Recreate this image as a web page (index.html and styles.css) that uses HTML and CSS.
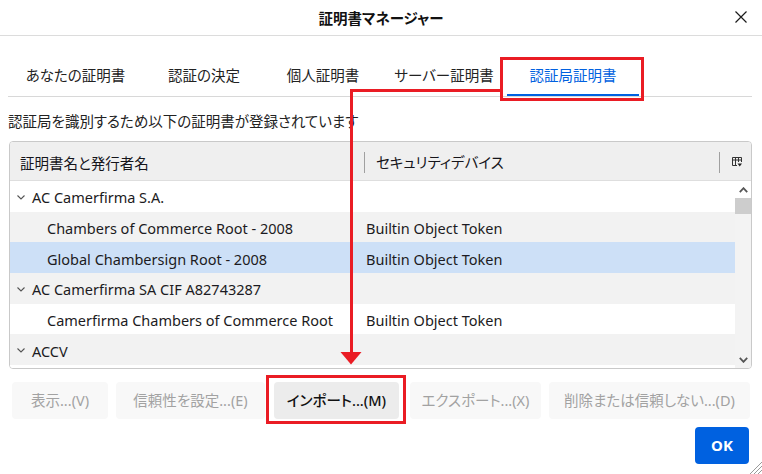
FILE: index.html
```html
<!DOCTYPE html>
<html lang="ja">
<head>
<meta charset="utf-8">
<title>証明書マネージャー</title>
<link rel="stylesheet" href="styles.css">
</head>
<body>
<div class="dialog">
  <header class="titlebar">
    <span class="title">証明書マネージャー</span>
    <span class="close" aria-label="閉じる">
      <svg width="12" height="12" viewBox="0 0 12 12"><path d="M0.5 0.5 L11.5 11.5 M11.5 0.5 L0.5 11.5" stroke="#1b1b1b" stroke-width="1.2" fill="none"/></svg>
    </span>
  </header>

  <nav class="tabs">
    <span class="tab t1">あなたの証明書</span>
    <span class="tab t2">認証の決定</span>
    <span class="tab t3">個人証明書</span>
    <span class="tab t4">サーバー証明書</span>
    <span class="tab t5 selected">認証局証明書</span>
  </nav>

  <p class="desc">認証局を識別するため以下の証明書が登録されています</p>

  <div class="tree">
    <div class="thead">
      <div class="th th-name">証明書名と発行者名</div>
      <div class="th th-dev">セキュリティデバイス</div>
      <div class="th th-pick">
        <svg width="10" height="10" viewBox="0 0 10 10"><path d="M0.5 0.5 H9.5 V5 M0.5 0.5 V8.5 H5 M0.5 3 H9.5 M3.5 0.5 V8.5 M6.5 0.5 V5" stroke="#333" stroke-width="1" fill="none"/><path d="M5.5 6.5 H10 L7.75 9.5 Z" fill="#222"/></svg>
      </div>
    </div>
    <div class="tbody">
      <div class="rows">
        <div class="row odd"><div class="td td-name parent"><span class="twisty"><svg width="8" height="5" viewBox="0 0 8 5"><path d="M0.5 0.5 L4 4 L7.5 0.5" stroke="#555" stroke-width="1.1" fill="none"/></svg></span>AC Camerfirma S.A.</div><div class="td td-dev"></div></div>
        <div class="row even"><div class="td td-name child">Chambers of Commerce Root - 2008</div><div class="td td-dev">Builtin Object Token</div></div>
        <div class="row sel"><div class="td td-name child">Global Chambersign Root - 2008</div><div class="td td-dev">Builtin Object Token</div></div>
        <div class="row even"><div class="td td-name parent"><span class="twisty"><svg width="8" height="5" viewBox="0 0 8 5"><path d="M0.5 0.5 L4 4 L7.5 0.5" stroke="#555" stroke-width="1.1" fill="none"/></svg></span>AC Camerfirma SA CIF A82743287</div><div class="td td-dev"></div></div>
        <div class="row odd"><div class="td td-name child">Camerfirma Chambers of Commerce Root</div><div class="td td-dev">Builtin Object Token</div></div>
        <div class="row even"><div class="td td-name parent"><span class="twisty"><svg width="8" height="5" viewBox="0 0 8 5"><path d="M0.5 0.5 L4 4 L7.5 0.5" stroke="#555" stroke-width="1.1" fill="none"/></svg></span>ACCV</div><div class="td td-dev"></div></div>
        <div class="row odd"><div class="td td-name child">ACCVRAIZ1</div><div class="td td-dev">Builtin Object Token</div></div>
      </div>
      <div class="scrollbar">
        <span class="sb-btn">
          <svg width="9" height="6" viewBox="0 0 9 6"><path d="M0.8 5.2 L4.5 1.2 L8.2 5.2" stroke="#555" stroke-width="1.8" fill="none"/></svg>
        </span>
        <span class="sb-track"><span class="sb-thumb"></span></span>
        <span class="sb-btn">
          <svg width="9" height="6" viewBox="0 0 9 6"><path d="M0.8 0.8 L4.5 4.8 L8.2 0.8" stroke="#555" stroke-width="1.8" fill="none"/></svg>
        </span>
      </div>
    </div>
  </div>

  <div class="actions">
    <button class="btn disabled b-view">表示...(V)</button>
    <button class="btn disabled b-trust">信頼性を設定...(E)</button>
    <button class="btn b-import">インポート...(M)</button>
    <button class="btn disabled b-export">エクスポート...(X)</button>
    <button class="btn disabled b-delete">削除または信頼しない...(D)</button>
  </div>

  <div class="footer">
    <button class="btn ok">OK</button>
  </div>

  <svg class="grip" width="14" height="14" viewBox="0 0 14 14"><path d="M14 2 L2 14 M14 6 L6 14 M14 10 L10 14" stroke="#9a9a9a" stroke-width="1" fill="none"/></svg>

  <svg class="annot" width="762" height="474" viewBox="0 0 762 474">
    <rect x="501.5" y="58.5" width="141" height="41" fill="none" stroke="#ea1c24" stroke-width="3"/>
    <path d="M500 90.5 H351.5 V353" fill="none" stroke="#ea1c24" stroke-width="3"/>
    <path d="M340.5 352 H361.5 L351 364.5 Z" fill="#ea1c24"/>
    <rect x="267.5" y="376.5" width="137" height="46" fill="none" stroke="#ea1c24" stroke-width="3"/>
  </svg>
</div>
</body>
</html>
```

FILE: styles.css
```css
* { box-sizing: border-box; }

html, body {
  margin: 0;
  padding: 0;
  background: #ffffff;
}

body {
  font-family: "Noto Sans", "Noto Sans CJK JP", sans-serif;
  font-size: 14.5px;
  color: #15141a;
  font-feature-settings: "palt";
}

.dialog {
  position: relative;
  width: 762px;
  height: 474px;
  overflow: hidden;
}

/* Title bar */
.titlebar {
  height: 36px;
  border-bottom: 1px solid #dcdcdc;
  display: flex;
  align-items: center;
  justify-content: center;
  position: relative;
}

.title {
  font-size: 14.5px;
  font-weight: 600;
  color: #111;
  padding-bottom: 1px;
}

.close {
  position: absolute;
  right: 15px;
  top: 11px;
  display: flex;
}

/* Tabs */
.tabs {
  display: flex;
  margin: 0 10px 0 8px;
  padding-top: 22px;
  border-bottom: 1px solid #d8d8d8;
}

.tab {
  height: 38px;
  padding: 0 0 4px;
  border-bottom: 2px solid transparent;
  display: flex;
  align-items: center;
  justify-content: center;
  color: #222;
  white-space: nowrap;
}

.t1 { width: 135px; }
.t2 { width: 122px; }
.t3 { width: 116px; }
.t4 { width: 126px; }
.t5 { width: 132px; }

.tab.selected {
  color: #0061e0;
  border-bottom-color: #0061e0;
}

/* Description */
.desc {
  margin: 14px 0 10px 8px;
  line-height: 20px;
  color: #222;
}

/* Tree */
.tree {
  margin: 0 10px 0 9px;
  border: 1px solid #c9c9c9;
  border-radius: 4px;
  overflow: hidden;
}

.thead {
  height: 39px;
  background: #efefef;
  border-bottom: 1px solid #dedede;
  display: flex;
  align-items: center;
  padding-top: 2px;
}

.th {
  position: relative;
  white-space: nowrap;
}

.th-name {
  width: 354px;
  padding-left: 10px;
}

.th-dev {
  flex: 1;
  padding-left: 11px;
  border-left: 1px solid #a0a0a0;
  line-height: 21px;
}

.th-pick {
  width: 32px;
  height: 21px;
  border-left: 1px solid #a0a0a0;
  display: flex;
  align-items: center;
  justify-content: center;
  padding-left: 2px;
}

.tbody {
  display: flex;
  height: 187px;
}

.rows {
  flex: 1;
  overflow: hidden;
}

.row {
  height: 30.67px;
  display: flex;
  align-items: center;
  padding-top: 2px;
  white-space: nowrap;
  color: #1c1b22;
  font-size: 14.5px;
}

.row.odd { background: #ffffff; }
.row.even { background: #f2f2f2; }
.row.sel { background: #cde0f7; }

.td-name {
  width: 354px;
  display: flex;
  align-items: center;
}

.td-name.parent { padding-left: 7px; }
.td-name.child { padding-left: 37px; }

.twisty {
  display: inline-flex;
  align-items: center;
  width: 14px;
  height: 10px;
  margin-right: 1px;
}

.td-dev {
  flex: 1;
  padding-left: 2px;
}

/* Scrollbar */
.scrollbar {
  width: 16px;
  background: #f3f3f3;
  display: flex;
  flex-direction: column;
}

.sb-btn {
  height: 17px;
  display: flex;
  align-items: center;
  justify-content: center;
}

.scrollbar .sb-btn:first-child { background: #ffffff; }

.sb-track {
  flex: 1;
  display: flex;
  flex-direction: column;
}

.sb-thumb {
  height: 16px;
  background: #cdcdcd;
}

/* Buttons */
.actions {
  display: flex;
  gap: 8px;
  margin: 13px 0 0 12px;
}

.btn {
  font-family: inherit;
  font-size: 14.5px;
  font-feature-settings: "palt";
  height: 37px;
  border: none;
  border-radius: 4px;
  padding: 0 8px;
  background: #f0f0f4;
  color: #15141a;
  white-space: nowrap;
  text-align: center;
  line-height: 37px;
}

.btn.disabled {
  background: #f8f8f8;
  color: #a2a2a2;
}

.b-view { min-width: 96px; }
.b-trust { min-width: 149px; }
.b-import { min-width: 125px; margin-left: 1px; background: #ececec; color: #111; font-weight: 500; }
.b-export { min-width: 131px; margin-left: 3px; }
.b-delete { min-width: 201px; }

.footer {
  display: flex;
  justify-content: flex-end;
  margin: 8px 13px 0 0;
}

.btn.ok {
  min-width: 54px;
  padding: 0;
  background: #0061e0;
  color: #ffffff;
  font-weight: 700;
  font-size: 15px;
}

.grip {
  position: absolute;
  right: 0;
  bottom: 0;
}

.annot {
  position: absolute;
  left: 0;
  top: 0;
  pointer-events: none;
}
```
